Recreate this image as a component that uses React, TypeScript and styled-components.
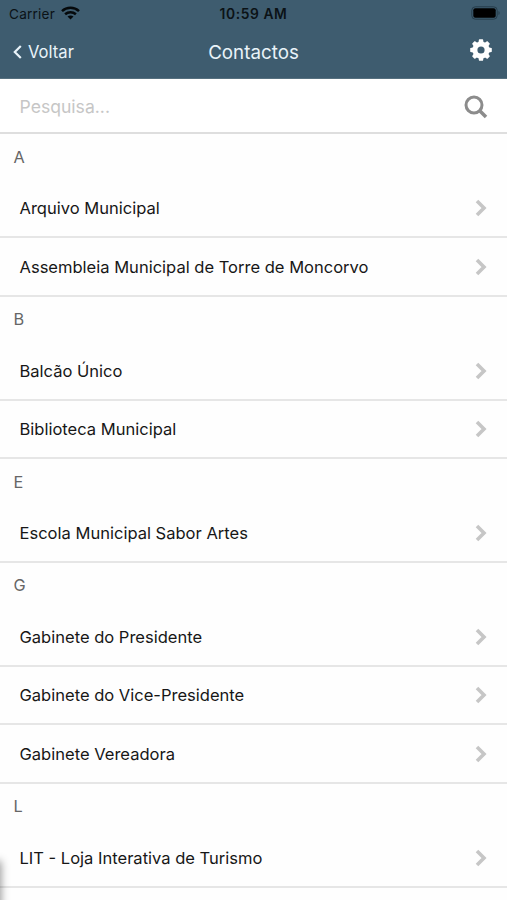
import React from "react";
import styled, { createGlobalStyle } from "styled-components";

const GlobalStyle = createGlobalStyle`
  * { box-sizing: border-box; }
  body {
    margin: 0;
    background: #fff;
    font-family: Inter, "Liberation Sans", sans-serif;
    overflow: hidden;
  }
`;

const Screen = styled.main`
  position: relative;
  width: 507px;
  height: 900px;
  overflow: hidden;
  background: #fefefe;
`;

const Header = styled.header`
  height: 79px;
  background: #3e5c6f;
  border-bottom: 1px solid #56707f;
`;

const Bar = styled.div<{ $height: number }>`
  display: grid;
  grid-template-columns: 1fr auto 1fr;
  align-items: center;
  height: ${(p) => p.$height}px;
`;

const Carrier = styled.div`
  display: flex;
  align-items: center;
  gap: 6px;
  padding-left: 9px;
  color: #0b1216;
  font-size: 13.6px;
  letter-spacing: 0.2px;

  svg { margin-top: -2px; }
`;

const Clock = styled.time`
  color: #0b1216;
  font-size: 13.8px;
  font-weight: 600;
  letter-spacing: 0.6px;
`;

const Battery = styled.svg`
  justify-self: end;
  margin: -1px 6px 0 0;
`;

const Back = styled.button`
  display: flex;
  align-items: center;
  gap: 6px;
  padding: 1px 0 0 13px;
  border: 0;
  background: none;
  color: #e9f3f9;
  font: 400 16.6px Inter, sans-serif;
`;

const Title = styled.h1`
  margin: 0;
  padding-top: 2px;
  color: #e9f3f9;
  font-size: 18.8px;
  font-weight: 400;
`;

const Settings = styled.button`
  justify-self: end;
  display: flex;
  margin: -3px 15px 0 0;
  padding: 0;
  border: 0;
  background: none;
  color: #fff;
`;

const Search = styled.label`
  display: flex;
  align-items: center;
  justify-content: space-between;
  height: 55.4px;
  padding: 1px 19px 0 19.5px;
  border-bottom: 2px solid #dedede;
  background: #fff;

  svg { margin-top: 2px; }
`;

const SearchInput = styled.input`
  flex: 1;
  min-width: 0;
  padding: 0;
  border: 0;
  outline: 0;
  background: none;
  font: 400 17.6px Inter, sans-serif;
  &::placeholder { color: #c6c6c6; opacity: 1; }
`;

const Letter = styled.h2`
  display: flex;
  align-items: center;
  height: 45.1px;
  margin: 0;
  padding-left: 13.5px;
  color: #666;
  font-size: 16.3px;
  font-weight: 400;
`;

const Row = styled.div`
  display: flex;
  align-items: center;
  justify-content: space-between;
  height: 58.65px;
  padding: 1px 20px 0 19.5px;
  border-bottom: 2px solid #e6e6e6;
  color: #171717;
  font-size: 16.55px;
`;

const EdgeShadow = styled.div`
  position: absolute;
  left: -8px;
  bottom: -8px;
  width: 8px;
  height: 46px;
  box-shadow: 0 0 8px 1px rgba(0, 0, 0, 0.42);
`;

const sections: { letter: string; names: string[] }[] = [
  { letter: "A", names: ["Arquivo Municipal", "Assembleia Municipal de Torre de Moncorvo"] },
  { letter: "B", names: ["Balcão Único", "Biblioteca Municipal"] },
  { letter: "E", names: ["Escola Municipal Sabor Artes"] },
  { letter: "G", names: ["Gabinete do Presidente", "Gabinete do Vice-Presidente", "Gabinete Vereadora"] },
  { letter: "L", names: ["LIT - Loja Interativa de Turismo"] },
];

const WifiIcon = () => (
  <svg width="19" height="14" viewBox="0 0 19 14" fill="none" stroke="#05090b" strokeWidth="2.5">
    <path d="M1 5.1C5.7.7 13.3.7 18 5.1" />
    <path d="M4.1 8.3c3.1-2.8 7.7-2.8 10.8 0" />
    <path d="M9.5 13.6 6.5 10.6c1.7-1.5 4.3-1.5 6 0z" fill="#05090b" stroke="none" />
  </svg>
);

const GearIcon = () => (
  <svg width="22" height="22" viewBox="0 0 22 22">
    <circle cx="11" cy="11" r="6.1" fill="none" stroke="currentColor" strokeWidth="5" />
    {[0, 45, 90, 135, 180, 225, 270, 315].map((angle) => (
      <path
        key={angle}
        d="M8.3 4 9 .6Q9.100.2 9.500.2h3q.4 0 .5.4L13.700 4z"
        fill="currentColor"
        transform={`rotate(${angle} 11 11)`}
      />
    ))}
  </svg>
);

const Chevron = () => (
  <svg width="12" height="18" viewBox="0 0 12 18" fill="none" stroke="#c6c6c6" strokeWidth="3.6">
    <path d="M2 2l7 7-7 7" />
  </svg>
);

export default function App() {
  return (
    <Screen>
      <GlobalStyle />
      <Header>
        <Bar $height={27}>
          <Carrier>
            Carrier
            <WifiIcon />
          </Carrier>
          <Clock>10:59 AM</Clock>
          <Battery width="30" height="14" viewBox="0 0 30 14">
            <rect x=".8" y=".8" width="25.4" height="12.4" rx="3.5" fill="none" stroke="#263d4b" />
            <rect x="2.3" y="2.3" width="22.4" height="9.4" rx="2" fill="#000" />
            <path d="M27.5 5v4c1.5-.5 1.5-3.500 0-4" fill="#263d4b" />
          </Battery>
        </Bar>
        <Bar $height={49}>
          <Back>
            <svg width="9" height="14" viewBox="0 0 9 14" fill="none" stroke="currentColor" strokeWidth="2.2">
              <path d="M7.800 1 1.800 7l6 6" />
            </svg>
            Voltar
          </Back>
          <Title>Contactos</Title>
          <Settings aria-label="Definições">
            <GearIcon />
          </Settings>
        </Bar>
      </Header>
      <Search>
        <SearchInput placeholder="Pesquisa..." />
        <svg width="24" height="24" viewBox="0 0 24 24" fill="none" stroke="#8c8c8c" strokeWidth="3">
          <circle cx="10" cy="10" r="8" />
          <path d="M15.500 15.500 22 22" strokeWidth="3.600" />
        </svg>
      </Search>
      {sections.map((section) => (
        <section key={section.letter}>
          <Letter>{section.letter}</Letter>
          {section.names.map((name) => (
            <Row key={name}>
              {name}
              <Chevron />
            </Row>
          ))}
        </section>
      ))}
      <EdgeShadow />
    </Screen>
  );
}
